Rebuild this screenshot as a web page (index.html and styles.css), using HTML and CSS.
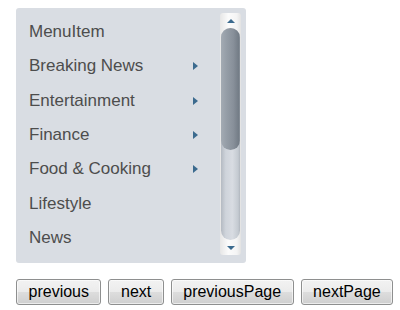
FILE: index.html
```html
<!DOCTYPE html>
<html>
<head>
<meta charset="utf-8">
<link rel="stylesheet" href="styles.css">
</head>
<body>
<div class="menu">
  <ul class="list">
    <li class="item"><span>MenuItem</span></li>
    <li class="item"><span>Breaking News</span><i class="arrow"></i></li>
    <li class="item"><span>Entertainment</span><i class="arrow"></i></li>
    <li class="item"><span>Finance</span><i class="arrow"></i></li>
    <li class="item"><span>Food &amp; Cooking</span><i class="arrow"></i></li>
    <li class="item"><span>Lifestyle</span></li>
    <li class="item"><span>News</span></li>
  </ul>
  <div class="scrollbar">
    <div class="sb-btn"><i class="up"></i></div>
    <div class="gutter"><div class="thumb"></div></div>
    <div class="sb-btn"><i class="down"></i></div>
  </div>
</div>
<div class="buttons">
  <button class="btn">previous</button>
  <button class="btn">next</button>
  <button class="btn">previousPage</button>
  <button class="btn">nextPage</button>
</div>
</body>
</html>
```

FILE: styles.css
```css
html, body {
  margin: 0;
  background: #ffffff;
}
body {
  padding: 8px 0 0 16px;
  font-family: "Liberation Sans", Arial, sans-serif;
}
.menu {
  width: 230px;
  height: 255px;
  background: #d9dde3;
  border-radius: 3px;
  display: flex;
  box-sizing: border-box;
}
.list {
  list-style: none;
  margin: 0;
  padding: 7px 0 0 0;
  flex: 1;
}
.item {
  height: 34.3px;
  display: flex;
  align-items: center;
  justify-content: space-between;
  padding: 0 22px 0 13px;
  font-size: 17px;
  color: #4d4d4d;
}
.arrow {
  width: 0;
  height: 0;
  border-top: 4px solid transparent;
  border-bottom: 4px solid transparent;
  border-left: 5px solid #3b6a8e;
}
.scrollbar {
  width: 21px;
  margin: 5px 5px 8px 0;
  background: linear-gradient(to right, #e6e6e6, #fbfbfb 40%, #f4f4f4 80%, #e2e2e2);
  border-radius: 3px;
  display: flex;
  flex-direction: column;
}
.sb-btn {
  height: 15px;
  display: flex;
  align-items: center;
  justify-content: center;
}
.up {
  width: 0;
  height: 0;
  border-left: 4px solid transparent;
  border-right: 4px solid transparent;
  border-bottom: 4px solid #3b6a8e;
}
.down {
  width: 0;
  height: 0;
  border-left: 4px solid transparent;
  border-right: 4px solid transparent;
  border-top: 4px solid #3b6a8e;
}
.gutter {
  flex: 1;
  margin: 0 1px;
  border-radius: 10px;
  background: linear-gradient(to right, #b4bac2, #cfd4db 25%, #d8dce2 60%, #c4cad1 90%, #b0b6be);
  display: flex;
  flex-direction: column;
}
.thumb {
  height: 122px;
  border-radius: 10px;
  background: linear-gradient(to right, #a4abb3, #959da6 30%, #88909a 65%, #747d87 92%, #8a929b);
}
.buttons {
  display: flex;
  gap: 7px;
  margin-top: 16px;
}
.btn {
  font-family: "Liberation Sans", Arial, sans-serif;
  font-size: 16px;
  color: #000;
  height: 26px;
  padding: 0 11.5px;
  border: 1px solid #8e8f8f;
  border-radius: 3px;
  background: linear-gradient(to bottom, #f2f2f2 0%, #ebebeb 50%, #dddddd 51%, #cfcfcf 100%);
  box-shadow: inset 0 0 0 1px rgba(255,255,255,0.6);
}
```
